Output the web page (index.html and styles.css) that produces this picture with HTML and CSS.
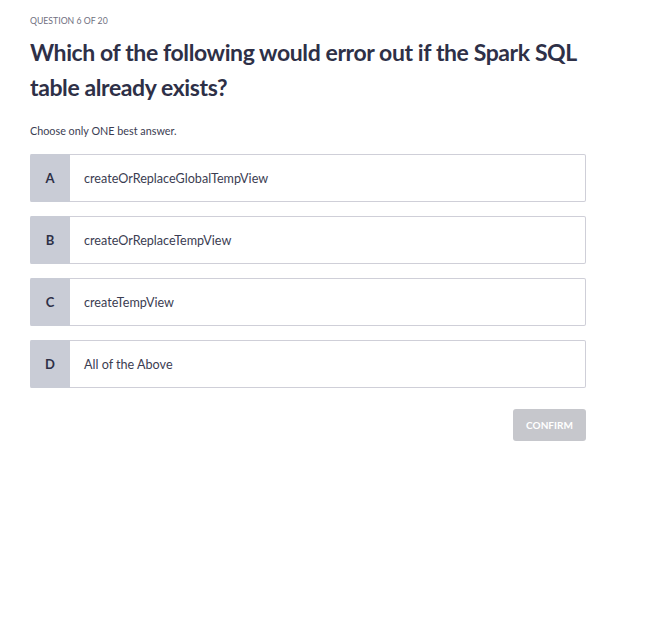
FILE: index.html
```html
<!DOCTYPE html>
<html>
<head>
<meta charset="utf-8">
<link rel="stylesheet" href="styles.css">
</head>
<body>
<div class="quiz">
  <div class="counter">QUESTION 6 OF 20</div>
  <h1 class="question">Which of the following would error out if the Spark SQL table already exists?</h1>
  <div class="hint">Choose only ONE best answer.</div>
  <div class="options">
    <div class="option"><div class="letter">A</div><div class="text">createOrReplaceGlobalTempView</div></div>
    <div class="option"><div class="letter">B</div><div class="text">createOrReplaceTempView</div></div>
    <div class="option"><div class="letter">C</div><div class="text">createTempView</div></div>
    <div class="option"><div class="letter">D</div><div class="text">All of the Above</div></div>
  </div>
  <div class="actions"><button class="confirm">CONFIRM</button></div>
</div>
</body>
</html>
```
FILE: styles.css
```css
* { box-sizing: border-box; }
body {
  margin: 0;
  background: #fff;
  font-family: Lato, "Open Sans", sans-serif;
  color: #3b3d52;
}
.quiz {
  width: 556px;
  margin-left: 30px;
  padding-top: 15px;
}
.counter {
  font-size: 8.7px;
  color: #6f7080;
  line-height: 11px;
}
.question {
  margin: 9px 0 0 0;
  font-size: 23px;
  letter-spacing: -0.4px;
  line-height: 35px;
  font-weight: 700;
  color: #2e3047;
}
.hint {
  margin-top: 19px;
  font-size: 10.8px;
  line-height: 14px;
  color: #3b3d52;
}
.options {
  margin-top: 16px;
  display: flex;
  flex-direction: column;
  gap: 14px;
}
.option {
  display: flex;
  height: 48px;
  border: 1px solid #cfcfd8;
  border-left: none;
  border-radius: 2px;
  background: #fff;
}
.letter {
  width: 40px;
  background: #c9ccd6;
  display: flex;
  align-items: center;
  justify-content: center;
  font-size: 13px;
  font-weight: 700;
  color: #2e3047;
  margin-top: -1px;
  margin-bottom: -1px;
  border-radius: 2px 0 0 2px;
}
.text {
  display: flex;
  align-items: center;
  padding-left: 14px;
  font-size: 12.6px;
  color: #3b3d52;
}
.actions {
  display: flex;
  justify-content: flex-end;
  margin-top: 21px;
}
.confirm {
  width: 73px;
  height: 32px;
  border: none;
  border-radius: 3px;
  background: #c6c7cc;
  color: #fff;
  font-family: Lato, sans-serif;
  font-weight: 700;
  font-size: 10px;
  padding: 0;
}
```
